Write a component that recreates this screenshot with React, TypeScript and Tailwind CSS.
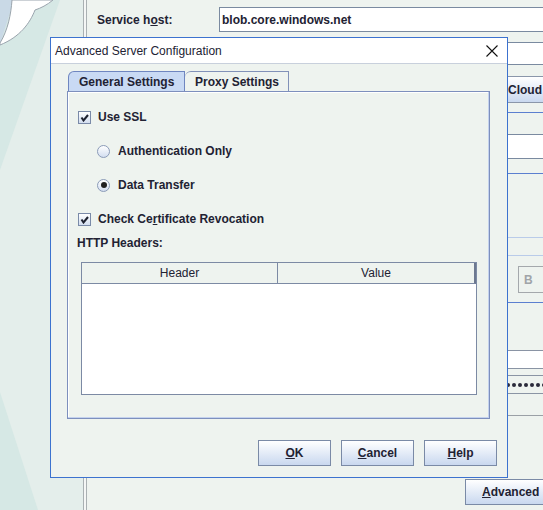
import React from "react";

const font = { fontFamily: '"Liberation Sans", Arial, sans-serif' };

const Check = () => (
  <div className="w-[13px] h-[13px] border border-[#7a8aa8] bg-gradient-to-b from-white to-[#d3def0] flex items-center justify-center">
    <svg width="9" height="9" viewBox="0 0 9 9">
      <path d="M1.5 4.5 L3.5 7.5 L8 2" fill="none" stroke="#1e2230" strokeWidth="2" />
    </svg>
  </div>
);

const Radio = ({ on }: { on?: boolean }) => (
  <div className="w-[13px] h-[13px] rounded-full border border-[#8b9bb8] bg-gradient-to-b from-white to-[#d3def0] flex items-center justify-center">
    {on && <div className="w-[6px] h-[6px] rounded-full bg-[#202020]" />}
  </div>
);

const Btn = ({ u, rest }: { u: string; rest: string }) => (
  <button className="w-[73px] h-[26px] border border-[#7a8aa6] bg-gradient-to-b from-white to-[#c9d8ef] text-[12px] font-bold text-[#222233]">
    <span className="underline">{u}</span>
    {rest}
  </button>
);

export default function App() {
  return (
    <div style={font} className="relative w-[543px] h-[510px] overflow-hidden bg-[#eef3ef] flex text-[12px] text-[#222233]">
      {/* left decorative strip */}
      <div className="w-[83px] h-full shrink-0">
        <svg width="83" height="510" viewBox="0 0 83 510">
          <rect width="83" height="510" fill="#e4eeeb" />
          <polygon points="0,0 60,0 0,170" fill="#d6e8e5" />
          <polygon points="0,392 38,510 0,510" fill="#d6e8e5" />
          <polygon points="0,0 14,0 0,44" fill="#c9d9e6" />
          <path d="M12,0 L53,0 C47,5 41,8 35,10 C30,23 20,37 0,45 L0,43 C8,30 11,14 12,0 Z" fill="#ffffff" stroke="#9aa4ad" strokeWidth="1" />
        </svg>
      </div>
      <div className="w-[4px] h-full shrink-0 border-l border-r border-[#a9b0b2] bg-[#f4f6f5]" />

      {/* underlying form */}
      <div className="flex-1 flex flex-col">
        <div className="mt-[7px] h-[25px] flex items-center">
          <span className="w-[132px] pl-[10px] font-bold">
            Service h<span className="underline">o</span>st:
          </span>
          <div className="flex-1 h-[25px] bg-white border border-[#7a8aa0] flex items-center pl-[2px] font-bold">blob.core.windows.net</div>
        </div>
        <div className="mt-[10px] h-[23px] ml-[132px] bg-white border border-[#7a8aa0]" />
        <div className="mt-[11px] h-[27px] ml-[413px] border border-[#8a96aa] bg-gradient-to-b from-white to-[#c9d8ef] flex items-center pl-[7px] font-bold">
          Cloud
        </div>
        <div className="mt-[9px] h-px bg-[#5b7fd0]" />
        <div className="mt-[21px] h-[25px] ml-[132px] bg-white border border-[#7a8aa0]" />
        <div className="mt-[14px] h-px bg-[#5b7fd0]" />
        <div className="mt-[63px] h-px bg-[#b9cbe9]" />
        <div className="mt-[17px] h-px bg-[#b9cbe9]" />
        <div className="mt-[10px] h-[27px] ml-[431px] w-[80px] border border-[#a4a8ac] flex items-center pl-[5px] font-bold text-[#a0a4a8]">
          B
        </div>
        <div className="mt-[9px] h-px bg-[#5b7fd0]" />
        <div className="mt-[47px] h-[19px] ml-[132px] bg-white border-y border-[#8a94a4]" />
        <div className="mt-[6px] h-[19px] ml-[132px] bg-[#eef3ef] border-y border-[#8a94a4] flex items-center pl-[287px] gap-[2px]">
          {Array.from({ length: 12 }).map((_, i) => (
            <div key={i} className="w-[4px] h-[4px] rounded-full bg-[#2a2a3a]" />
          ))}
        </div>
        <div className="mt-[21px] h-px bg-[#9aa0a6]" />
        <div className="mt-[63px] h-[26px] ml-[378px] border border-[#7a8aa6] bg-gradient-to-b from-white to-[#c9d8ef] flex items-center pl-[16px] font-bold whitespace-nowrap">
          <span>
            <span className="underline">A</span>dvanced
          </span>
        </div>
      </div>

      {/* dialog */}
      <div className="absolute left-[50px] top-[37px] w-[458px] h-[441px] border border-[#3c72cf] bg-[#eef3ef] flex flex-col">
        <div className="h-[26px] bg-white border-b border-[#c8d0dc] flex items-center justify-between pl-[4px] pr-[9px]">
          <span className="font-normal">Advanced Server Configuration</span>
          <svg width="12" height="12" viewBox="0 0 12 12">
            <path d="M0.5 0.5 L11.5 11.5 M11.5 0.5 L0.5 11.5" stroke="#111" strokeWidth="1.1" />
          </svg>
        </div>

        <div className="ml-[17px] mt-[7px] flex items-end h-[20px]">
          <div className="w-[117px] h-[20px] rounded-tl-[6px] border border-b-0 border-[#6f86c0] bg-[#c9daf4] flex items-center pl-[10px] font-bold">
            General Settings
          </div>
          <div className="w-[104px] h-[20px] rounded-tl-[6px] border border-b-0 border-l-0 border-[#8191b8] bg-[#eef3ef] flex items-center pl-[10px] font-bold">
            Proxy Settings
          </div>
        </div>

        <div className="ml-[16px] w-[423px] h-[328px] border border-[#7d8fbd] shadow-[inset_-1px_-1px_0_#c4d2ee,inset_1px_1px_0_#ffffff] flex flex-col pt-[8px] font-bold">
          <div className="h-[34px] flex items-center pl-[10px] gap-[7px]">
            <Check />
            <span>Use SSL</span>
          </div>
          <div className="h-[34px] flex items-center pl-[29px] gap-[8px]">
            <Radio />
            <span>Authentication Only</span>
          </div>
          <div className="h-[34px] flex items-center pl-[29px] gap-[8px]">
            <Radio on />
            <span>Data Transfer</span>
          </div>
          <div className="h-[34px] flex items-center pl-[10px] gap-[7px]">
            <Check />
            <span>
              Check Ce<span className="underline">r</span>tificate Revocation
            </span>
          </div>
          <div className="h-[14px] flex items-center pl-[9px]">HTTP Headers:</div>
          <div className="mt-[12px] ml-[13px] w-[396px] h-[133px] border border-[#7c8aa4] flex flex-col font-normal">
            <div className="h-[21px] flex border-b border-[#7c8aa4] border-r-2 border-r-[#6c7890] bg-[#eef3ef]">
              <div className="w-[196px] border-r border-[#7c8aa4] flex items-center justify-center">Header</div>
              <div className="flex-1 flex items-center justify-center">Value</div>
            </div>
            <div className="flex-1 bg-white" />
          </div>
        </div>

        <div className="mt-[21px] flex justify-end gap-[10px] pr-[10px]">
          <Btn u="O" rest="K" />
          <Btn u="C" rest="ancel" />
          <Btn u="H" rest="elp" />
        </div>
      </div>
    </div>
  );
}
